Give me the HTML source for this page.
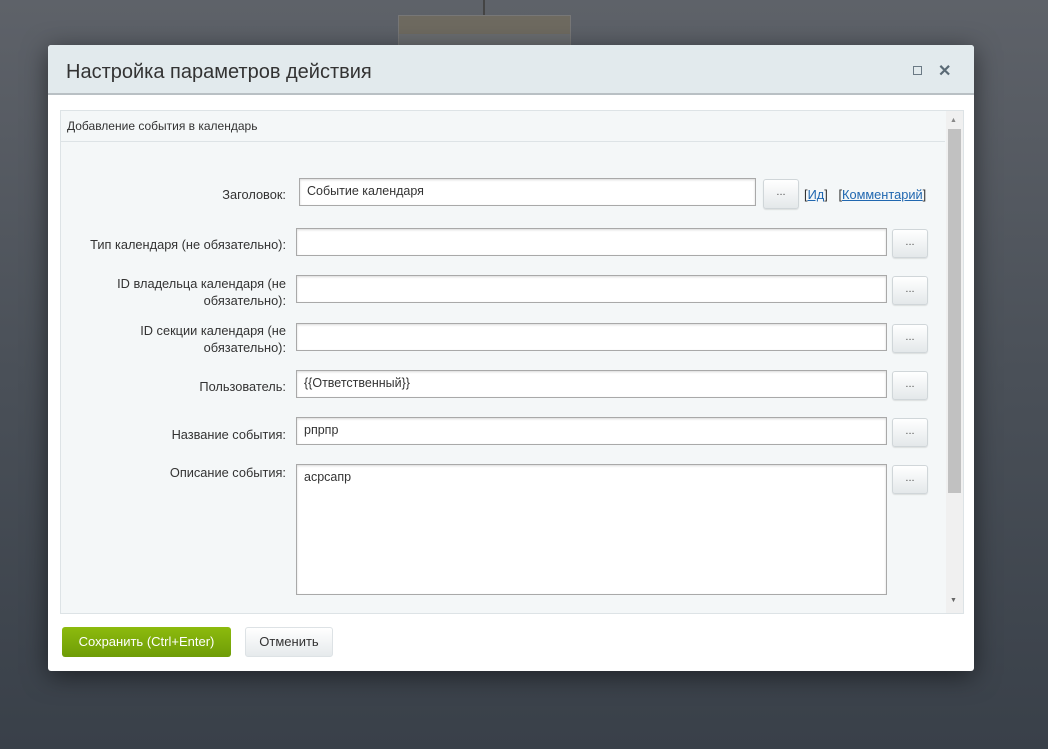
<!DOCTYPE html>
<html><head><meta charset="utf-8"><style>
body{margin:0;width:1048px;height:749px;overflow:hidden;background:linear-gradient(#5e6269,#4a5058 50%,#394049);font-family:"Liberation Sans","Noto Sans CJK SC",sans-serif;position:relative}
.a{position:absolute}
.node{left:398px;top:15px;width:171px;height:40px;background:#6a6d70;border:1px solid #777}
.dlg{left:48px;top:45px;width:926px;height:626px;background:#fff;border-radius:3px;box-shadow:0 5px 25px rgba(0,0,0,.5)}
.hdr{left:0;top:0;width:926px;height:48px;background:#e2eaed;border-bottom:2px solid #b9c0c4;border-radius:3px 3px 0 0}
.ttl{left:18px;top:16px;font-size:20px;color:#333}
.frame{left:12px;top:65px;width:902px;height:502px;background:#f4f7f8;border:1px solid #dde3e6}
.sec{left:0;top:0;width:884px;height:31px;border-bottom:1px solid #dde3e6;font-size:12px;color:#333;line-height:31px;padding-left:6px;box-sizing:border-box}
.sb{left:885px;top:0;width:17px;height:502px;background:#f0f0f0}
.lbl{left:38px;width:200px;text-align:right;font-size:12.8px;color:#333;line-height:17px}
.in{background:#fff;border:1px solid #a9a9a9;box-shadow:inset 0 1px 2px rgba(0,0,0,.15);font-size:12.5px;color:#333;padding:5px 7px;box-sizing:border-box}
.b{width:36px;height:29px;border-radius:3px;background:linear-gradient(#fff,#e4e8ea);border:1px solid #d0d6d9;box-sizing:border-box;text-align:center;font-size:11px;line-height:24px;color:#555;box-shadow:0 1px 1px rgba(0,0,0,.1)}
a{color:#2067b0;text-decoration:underline}
</style></head><body>
<div class="a" style="left:483px;top:0;width:2px;height:15px;background:#444"></div>
<div class="a node"><div class="a" style="left:0;top:0;width:171px;height:18px;background:#6e6a60"></div></div>
<div class="a dlg">
<div class="a hdr"><div class="a ttl">Настройка параметров действия</div>
<div class="a" style="left:865px;top:21px;width:7px;height:7px;border:1px solid #6b7a85"></div>
<div class="a" style="left:890px;top:16px;font-size:16px;color:#5a6a75;font-weight:bold">✕</div></div>
<div class="a frame">
<div class="a sec">Добавление события в календарь</div>
<div class="a sb"><div class="a" style="left:2px;top:18px;width:13px;height:364px;background:#c1c1c1"></div>
<div class="a" style="left:4px;top:6px;font-size:7px;color:#888">▲</div><div class="a" style="left:4px;top:486px;font-size:7px;color:#666">▼</div></div>
</div>
<div class="a lbl" style="top:141px">Заголовок:</div>
<div class="a in" style="left:251px;top:133px;width:457px;height:28px">Событие календаря</div>
<div class="a b" style="left:715px;top:134px;height:30px">...</div>
<div class="a" style="left:756px;top:142px;font-size:12.8px;color:#333">[<a>Ид</a>]&nbsp;&nbsp;&nbsp;[<a>Комментарий</a>]</div>

<div class="a lbl" style="top:191px">Тип календаря (не обязательно):</div>
<div class="a in" style="left:248px;top:183px;width:591px;height:28px"></div>
<div class="a b" style="left:844px;top:184px">...</div>

<div class="a lbl" style="top:230px">ID владельца календаря (не обязательно):</div>
<div class="a in" style="left:248px;top:230px;width:591px;height:28px"></div>
<div class="a b" style="left:844px;top:231px">...</div>

<div class="a lbl" style="top:277px">ID секции календаря (не обязательно):</div>
<div class="a in" style="left:248px;top:278px;width:591px;height:28px"></div>
<div class="a b" style="left:844px;top:279px">...</div>

<div class="a lbl" style="top:333px">Пользователь:</div>
<div class="a in" style="left:248px;top:325px;width:591px;height:28px">{{Ответственный}}</div>
<div class="a b" style="left:844px;top:326px">...</div>

<div class="a lbl" style="top:381px">Название события:</div>
<div class="a in" style="left:248px;top:372px;width:591px;height:28px">рпрпр</div>
<div class="a b" style="left:844px;top:373px">...</div>

<div class="a lbl" style="top:419px">Описание события:</div>
<div class="a in" style="left:248px;top:419px;width:591px;height:131px">асрсапр</div>
<div class="a b" style="left:844px;top:420px">...</div>

<div class="a" style="left:14px;top:582px;width:169px;height:30px;border-radius:3px;background:linear-gradient(#8dbb0d,#6e9c07);color:#fff;font-size:13px;text-align:center;line-height:30px">Сохранить (Ctrl+Enter)</div>
<div class="a" style="left:197px;top:582px;width:88px;height:30px;border-radius:3px;background:linear-gradient(#fff,#e6eaec);border:1px solid #dde2e5;box-sizing:border-box;color:#333;font-size:13px;text-align:center;line-height:28px">Отменить</div>
</div>
</body></html>
